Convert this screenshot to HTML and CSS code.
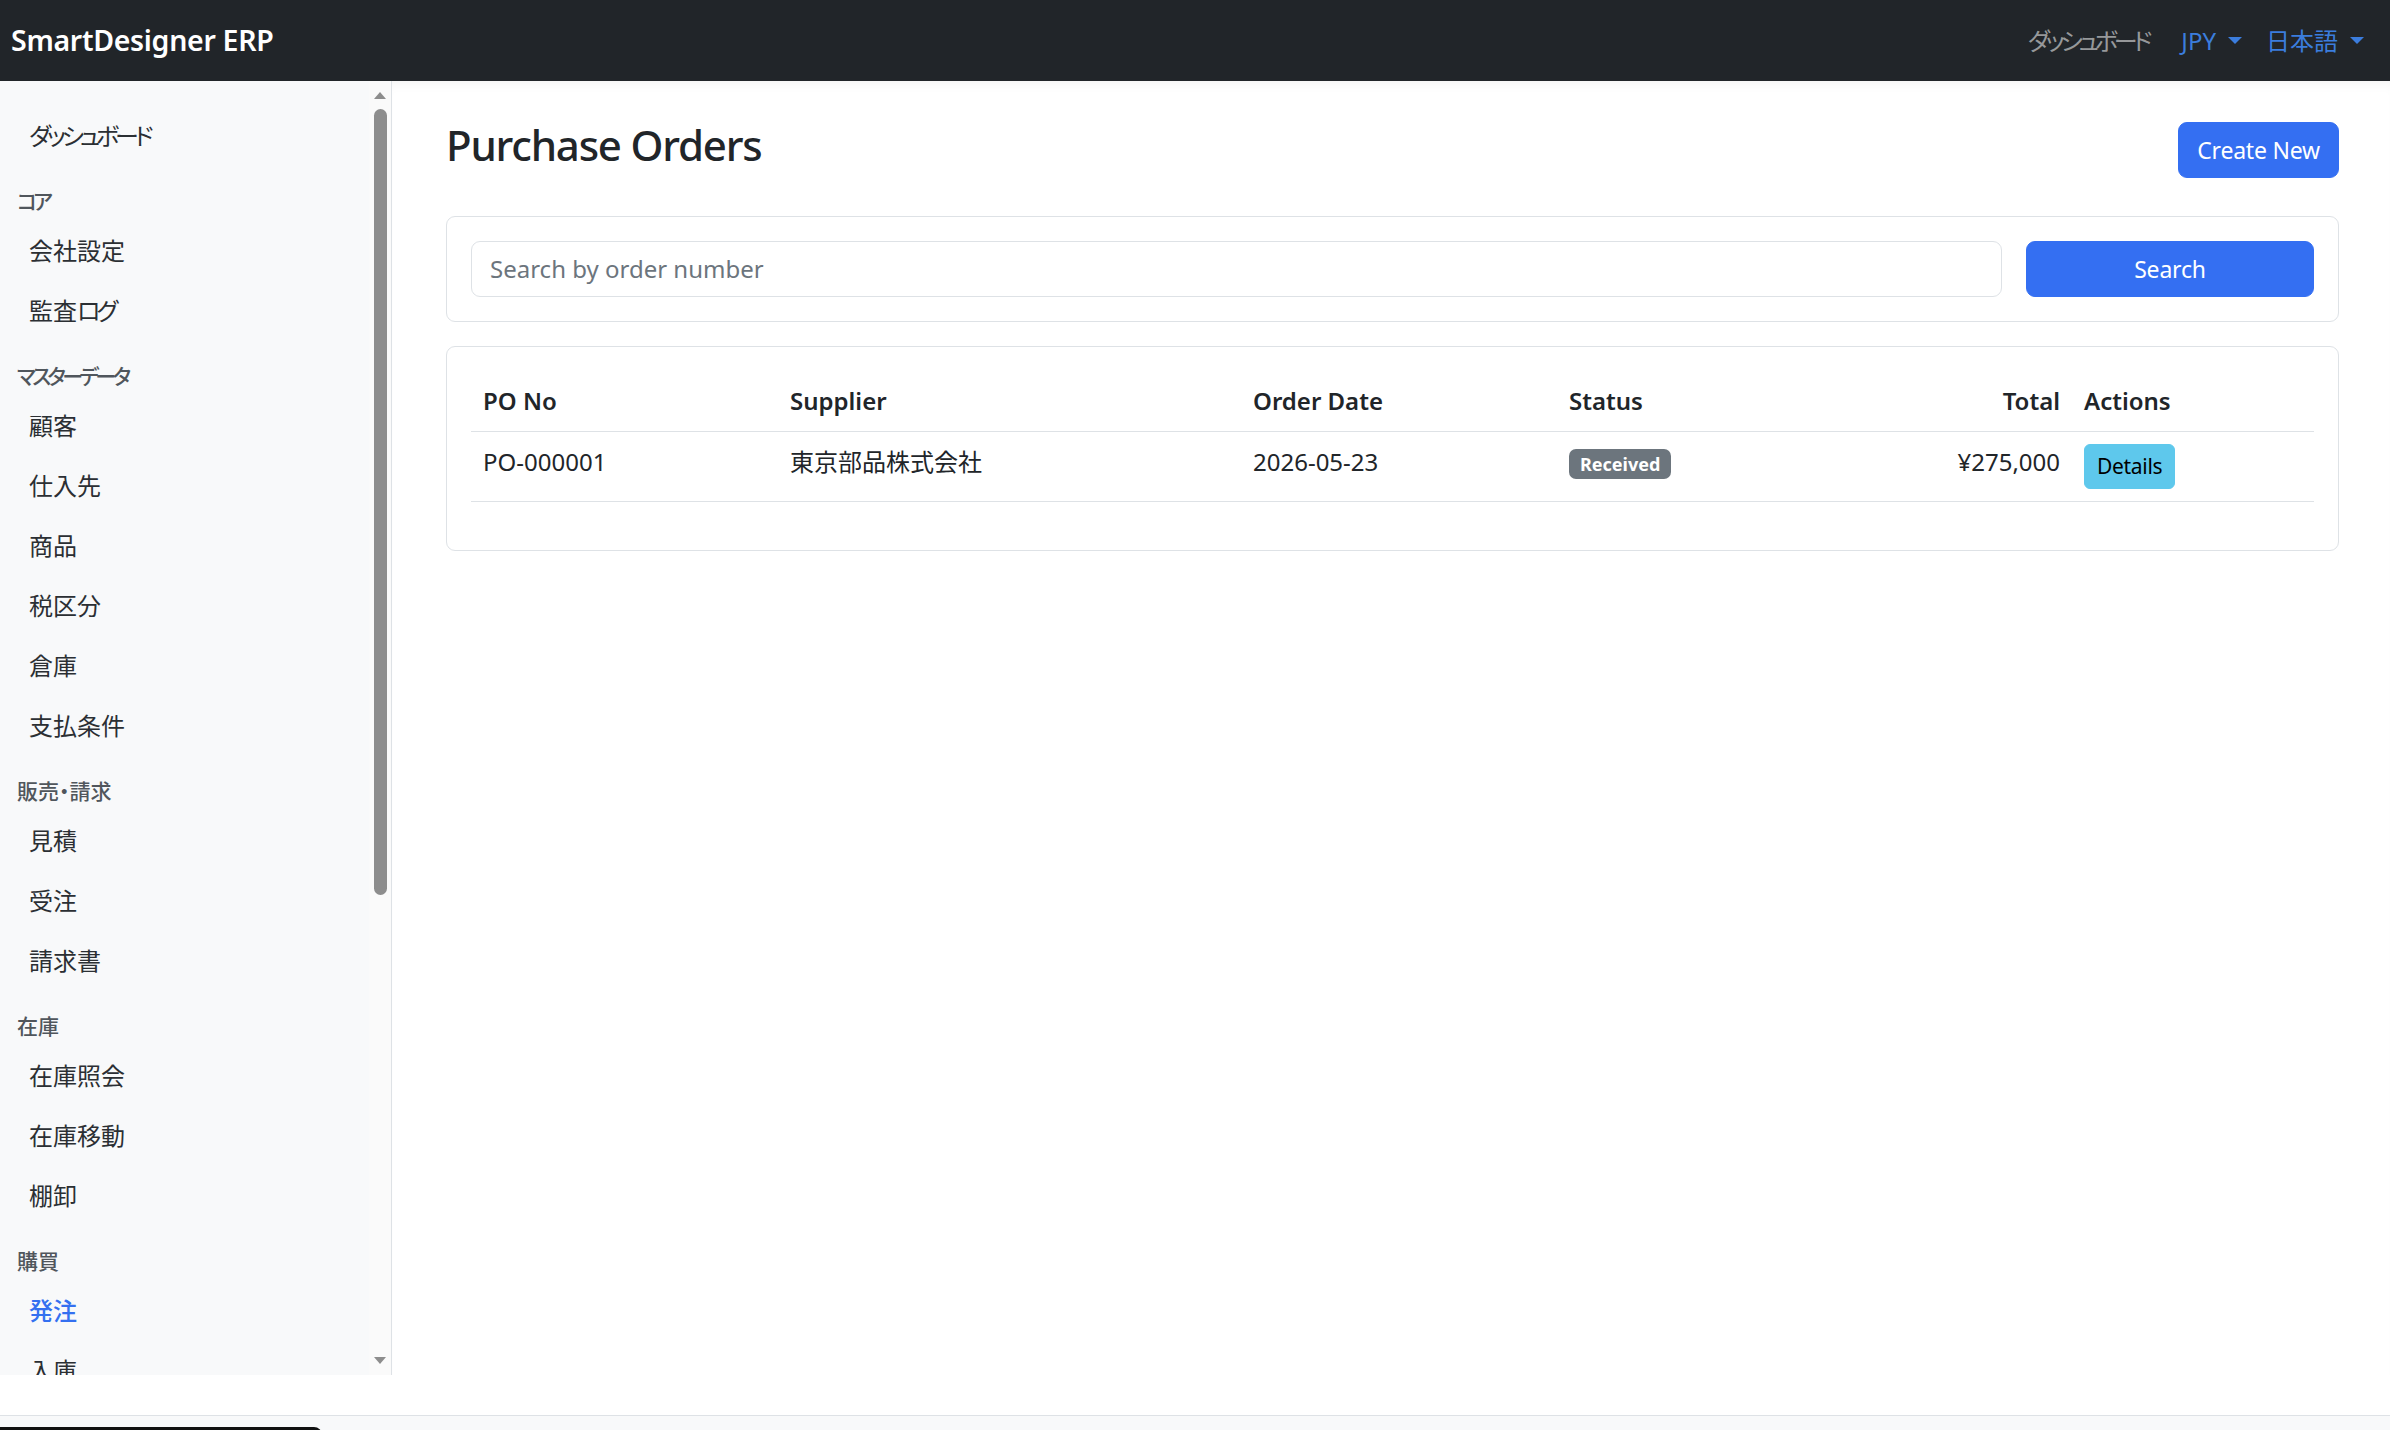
FILE: index.html
```html
<!DOCTYPE html>
<html lang="ja">
<head>
<meta charset="utf-8">
<title>Purchase Orders - SmartDesigner ERP</title>
<link rel="stylesheet" href="styles.css">
</head>
<body>
<header class="topbar">
  <a class="brand" href="#">SmartDesigner ERP</a>
  <ul class="topnav">
    <li><a class="topnav-link muted home" href="#"><span class="kana">ダッシュボード</span></a></li>
    <li><a class="topnav-link accent has-caret" href="#">JPY</a></li>
    <li><a class="topnav-link accent has-caret" href="#">日本語</a></li>
  </ul>
</header>

<div class="shell">
  <aside class="sidebar">
    <nav class="sidenav">
      <a class="side-link" href="#"><span class="kana">ダッシュボード</span></a>

      <div class="side-heading"><span class="kana">コア</span></div>
      <a class="side-link" href="#">会社設定</a>
      <a class="side-link" href="#">監査<span class="kana">ログ</span></a>

      <div class="side-heading"><span class="kana">マスターデータ</span></div>
      <a class="side-link" href="#">顧客</a>
      <a class="side-link" href="#">仕入先</a>
      <a class="side-link" href="#">商品</a>
      <a class="side-link" href="#">税区分</a>
      <a class="side-link" href="#">倉庫</a>
      <a class="side-link" href="#">支払条件</a>

      <div class="side-heading palt">販売・請求</div>
      <a class="side-link" href="#">見積</a>
      <a class="side-link" href="#">受注</a>
      <a class="side-link" href="#">請求書</a>

      <div class="side-heading">在庫</div>
      <a class="side-link" href="#">在庫照会</a>
      <a class="side-link" href="#">在庫移動</a>
      <a class="side-link" href="#">棚卸</a>

      <div class="side-heading">購買</div>
      <a class="side-link active" href="#">発注</a>
      <a class="side-link" href="#">入庫</a>
      <a class="side-link" href="#">仕入請求</a>

      <div class="side-heading">会計</div>
      <a class="side-link" href="#">仕訳</a>
      <a class="side-link" href="#">勘定科目</a>
      <a class="side-link" href="#">試算表</a>
    </nav>
    <div class="scrollbar" aria-hidden="true">
      <span class="sb-btn sb-up"></span>
      <div class="sb-track"><div class="sb-thumb"></div></div>
      <span class="sb-btn sb-down"></span>
    </div>
  </aside>

  <main class="content">
    <div class="page-head">
      <h2 class="page-title">Purchase Orders</h2>
      <a class="btn btn-primary" href="#">Create New</a>
    </div>

    <section class="card">
      <form class="search-row">
        <input class="form-control" type="text" placeholder="Search by order number">
        <button class="btn btn-primary btn-block" type="button">Search</button>
      </form>
    </section>

    <section class="card">
      <table class="table">
        <colgroup>
          <col class="c-no">
          <col class="c-supplier">
          <col class="c-date">
          <col class="c-status">
          <col class="c-total">
          <col class="c-actions">
        </colgroup>
        <thead>
          <tr>
            <th>PO No</th>
            <th>Supplier</th>
            <th>Order Date</th>
            <th>Status</th>
            <th class="num">Total</th>
            <th>Actions</th>
          </tr>
        </thead>
        <tbody>
          <tr>
            <td>PO-000001</td>
            <td>東京部品株式会社</td>
            <td>2026-05-23</td>
            <td><span class="badge">Received</span></td>
            <td class="num">¥275,000</td>
            <td><a class="btn btn-info btn-sm" href="#">Details</a></td>
          </tr>
        </tbody>
      </table>
    </section>
  </main>
</div>

<footer class="footer">
  <div class="footer-bar"></div>
</footer>
</body>
</html>
```

FILE: styles.css
```css
* { box-sizing: border-box; }

html, body {
  margin: 0;
  height: 1430px;
  overflow: hidden;
}

body {
  display: flex;
  flex-direction: column;
  font-family: "Noto Sans", "Noto Sans CJK JP", sans-serif;
  font-size: 24px;
  line-height: 1.5;
  color: #212529;
  background: #fff;
}

a { text-decoration: none; }

/* proportional kana, set tight like a UI gothic */
.palt { font-feature-settings: "palt"; }
.kana {
  font-feature-settings: "palt";
  letter-spacing: -0.17em;
}

/* ---------- top bar ---------- */
.topbar {
  height: 81px;
  flex: none;
  display: flex;
  align-items: center;
  justify-content: space-between;
  background: #212529;
  padding: 0 14px 0 11px;
}

.brand {
  color: #fff;
  font-size: 28.5px;
  font-weight: 600;
  letter-spacing: -0.3px;
}

.topnav {
  display: flex;
  list-style: none;
  margin: 0;
  padding: 0;
}

.topnav-link {
  display: inline-flex;
  align-items: center;
  padding: 0 12px;
  font-size: 24px;
}

.topnav-link.home { padding-right: 21px; }

.topnav-link.muted { color: rgba(255, 255, 255, 0.55); }
.topnav-link.accent { color: #3b7ddd; }

.has-caret::after {
  content: "";
  margin-left: 12px;
  border-top: 7px solid currentColor;
  border-left: 7px solid transparent;
  border-right: 7px solid transparent;
}

/* ---------- layout shell ---------- */
.shell {
  display: flex;
  height: 1294px;
  flex: none;
}

/* ---------- sidebar ---------- */
.sidebar {
  width: 392px;
  flex: none;
  display: flex;
  background: #f8f9fa;
  border-right: 1px solid #dee2e6;
  overflow: hidden;
}

.sidenav {
  flex: 1;
  display: flex;
  flex-direction: column;
  padding: 25px 0 0 17px;
  overflow: hidden;
}

.side-link {
  display: block;
  flex: none;
  padding: 12px 0 12px 12px;
  line-height: 36px;
  font-size: 24px;
  color: #2b2f33;
}

.side-link.active {
  color: #3470f0;
  font-weight: 500;
}

.side-heading {
  flex: none;
  padding: 20px 0 5px;
  line-height: 30px;
  font-size: 21px;
  font-weight: 500;
  color: #50565c;
}

/* drawn scrollbar of the menu column */
.scrollbar {
  width: 22px;
  flex: none;
  display: flex;
  flex-direction: column;
  align-items: center;
  background: #fafafa;
}

.sb-btn {
  height: 22px;
  flex: none;
  display: flex;
  align-items: center;
  justify-content: center;
}

.sb-btn::before {
  content: "";
  border-left: 6px solid transparent;
  border-right: 6px solid transparent;
}

.sb-up::before { border-bottom: 7px solid #8d8d8d; margin-top: 6px; }
.sb-down::before { border-top: 7px solid #8d8d8d; margin-bottom: 8px; }

.sb-track {
  flex: 1;
  width: 100%;
  display: flex;
  justify-content: center;
  padding-top: 6px;
}

.sb-thumb {
  width: 13px;
  height: 786px;
  border-radius: 7px;
  background: #8d8d8d;
}

/* ---------- content ---------- */
.content {
  flex: 1;
  min-width: 0;
  padding: 41px 51px 0 54px;
  box-shadow: inset 0 10px 14px -10px rgba(0, 0, 0, 0.07);
}

.page-head {
  display: flex;
  align-items: center;
  justify-content: space-between;
  min-height: 58px;
  margin-bottom: 36px;
}

.page-title {
  margin: -12px 0 0;
  font-size: 42px;
  font-weight: 500;
  line-height: 1.2;
  letter-spacing: -1.2px;
}

.btn {
  display: inline-block;
  font-family: inherit;
  font-size: 23px;
  line-height: 36px;
  padding: 9px 18px;
  border: 1px solid transparent;
  border-radius: 9px;
  text-align: center;
  letter-spacing: -0.2px;
  cursor: pointer;
}

.page-head .btn { margin-top: -2px; }

.btn-primary {
  background: #346ff2;
  border-color: #346ff2;
  color: #fff;
}

.btn-block { width: 100%; }

.btn-info {
  background: #5ec8ec;
  border-color: #5ec8ec;
  color: #000;
}

.btn-sm {
  font-size: 21px;
  line-height: 31px;
  padding: 6px 12px;
  border-radius: 6px;
  letter-spacing: -0.3px;
}

.card {
  border: 1px solid #dee2e6;
  border-radius: 9px;
  padding: 24px;
  margin-bottom: 24px;
  background: #fff;
}

.search-row {
  display: grid;
  grid-template-columns: 1fr 288px;
  gap: 24px;
  margin: 0;
}

.form-control {
  display: block;
  width: 100%;
  font-family: inherit;
  font-size: 24px;
  line-height: 36px;
  padding: 9px 18px;
  color: #212529;
  border: 1px solid #dee2e6;
  border-radius: 9px;
  background: #fff;
  outline: none;
}

.form-control::placeholder { color: #6c757d; }

/* ---------- table ---------- */
.table {
  width: 100%;
  border-collapse: collapse;
  table-layout: fixed;
  margin-bottom: 24px;
}

.c-no { width: 307px; }
.c-supplier { width: 463px; }
.c-date { width: 316px; }
.c-status { width: 300px; }
.c-actions { width: 242px; }

.table th,
.table td {
  padding: 12px;
  line-height: 36px;
  text-align: left;
  vertical-align: top;
  border-bottom: 1px solid #dee2e6;
  white-space: nowrap;
}

.table th { font-weight: 600; }

.table .num { text-align: right; }

.badge {
  display: inline-block;
  padding: 6px 11px;
  font-size: 18px;
  font-weight: 700;
  line-height: 1;
  color: #fff;
  background: #6c757d;
  border-radius: 7px;
  vertical-align: 0;
}

/* ---------- footer ---------- */
.footer {
  flex: 1;
  margin-top: 40px;
  border-top: 1px solid #dee2e6;
  background: #f8f9fa;
  padding-top: 11px;
  overflow: hidden;
}

.footer-bar {
  width: 322px;
  height: 40px;
  background: #111;
  border-top-right-radius: 8px;
}
```
